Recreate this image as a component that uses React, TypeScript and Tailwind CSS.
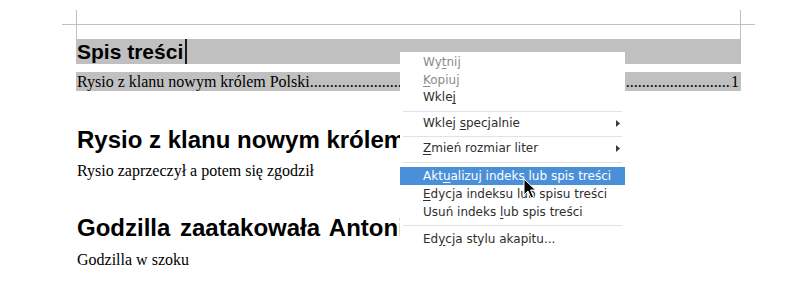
import React from "react";

const sans = { fontFamily: '"Liberation Sans", Arial, sans-serif' };
const serif = { fontFamily: '"Liberation Serif", "Times New Roman", serif' };
const menuFont = { fontFamily: '"DejaVu Sans", Verdana, sans-serif' };

function Arrow() {
  return (
    <svg width="4" height="7" viewBox="0 0 4 7" className="block">
      <polygon points="0,0 4,3.5 0,7" fill="#3a3a3a" />
    </svg>
  );
}

type Item = {
  pre: string;
  u: string;
  post: string;
  disabled?: boolean;
  active?: boolean;
  sub?: boolean;
  tall?: boolean;
};

function MenuItem({ pre, u, post, disabled, active, sub, tall }: Item) {
  const color = active
    ? "bg-[#4a90d9] text-white"
    : disabled
    ? "text-[#8b8b8b]"
    : "text-[#2e2e2e]";
  const h = tall ? "h-[18px] leading-[18px]" : "h-[17.5px] leading-[17.5px]";
  return (
    <div
      className={`${h} pl-[23px] pr-[5px] flex items-center justify-between text-[12px] whitespace-nowrap ${color}`}
    >
      <span>
        {pre}
        <span className="underline underline-offset-[2px]">{u}</span>
        {post}
      </span>
      {sub ? <Arrow /> : null}
    </div>
  );
}

function Sep({ extra }: { extra?: boolean }) {
  return (
    <div
      className={`mt-[4px] ${extra ? "mb-[4px]" : "mb-[3px]"} mx-[3px] h-px bg-[#e2e2e2]`}
    />
  );
}

export default function App() {
  return (
    <div className="relative w-[800px] h-[291px] bg-white overflow-hidden">
      {/* crop marks */}
      <div className="relative h-[39px]">
        <div className="absolute left-[62px] top-[24px] w-[693px] h-px bg-[#c0c0c0]" />
        <div className="absolute left-[76px] top-[10px] w-px h-[29px] bg-[#c0c0c0]" />
        <div className="absolute left-[740px] top-[10px] w-px h-[29px] bg-[#c0c0c0]" />
      </div>

      <div className="ml-[76px] w-[665px]">
        {/* TOC heading */}
        <div className="h-[25px] bg-[#c0c0c0] flex items-center">
          <span
            className="text-[21px] font-bold leading-[25px] text-black pl-px"
            style={sans}
          >
            Spis treści
          </span>
          <span className="ml-[2px] w-[2px] h-[25px] bg-[#1a1a1a]" />
        </div>

        {/* TOC entry */}
        <div
          className="mt-[8px] h-[19px] bg-[#c0c0c0] flex items-center text-[16px] leading-[19px] text-black whitespace-nowrap"
          style={serif}
        >
          <span className="pl-px">Rysio z klanu nowym królem Polski</span>
          <span className="flex-1 overflow-hidden">{".".repeat(200)}</span>
          <span className="pr-[2px]">1</span>
        </div>

        <div
          className="mt-[35px] text-[24px] font-bold leading-[28px] text-black whitespace-nowrap pl-px"
          style={sans}
        >
          Rysio z klanu nowym królem Polski
        </div>
        <div
          className="mt-[7px] text-[16px] leading-[19px] text-black pl-px"
          style={serif}
        >
          Rysio zaprzeczył a potem się zgodził
        </div>

        <div
          className="mt-[34px] text-[24px] font-bold leading-[28px] text-black whitespace-nowrap pl-px [word-spacing:3px]"
          style={sans}
        >
          Godzilla zaatakowała Antoniego
        </div>
        <div
          className="mt-[8px] text-[16px] leading-[19px] text-black pl-px"
          style={serif}
        >
          Godzilla w szoku
        </div>
      </div>

      {/* context menu */}
      <div
        className="absolute left-[400px] top-[52px] w-[225px] bg-white pt-[2px] pb-[2px]"
        style={menuFont}
      >
        <MenuItem pre="Wy" u="t" post="nij" disabled />
        <MenuItem pre="" u="K" post="opiuj" disabled />
        <MenuItem pre="Wkle" u="j" post="" />
        <Sep />
        <MenuItem pre="Wklej " u="s" post="pecjalnie" sub />
        <Sep />
        <MenuItem pre="" u="Z" post="mień rozmiar liter" sub />
        <Sep extra />
        <MenuItem pre="Akt" u="u" post="alizuj indeks lub spis treści" active tall />
        <MenuItem pre="" u="E" post="dycja indeksu lub spisu treści" tall />
        <MenuItem pre="Usuń indeks " u="l" post="ub spis treści" tall />
        <Sep extra />
        <MenuItem pre="Ed" u="y" post="cja stylu akapitu..." tall />
      </div>

      {/* mouse pointer */}
      <svg
        className="absolute left-[523px] top-[178px]"
        width="14"
        height="22"
        viewBox="0 0 14 22"
      >
        <path
          d="M1 1 L1 17 L5 13 L8 20 L10.5 19 L7.5 12 L12.5 12 Z"
          fill="#000"
          stroke="#fff"
          strokeWidth="1"
          strokeLinejoin="round"
        />
      </svg>
    </div>
  );
}
